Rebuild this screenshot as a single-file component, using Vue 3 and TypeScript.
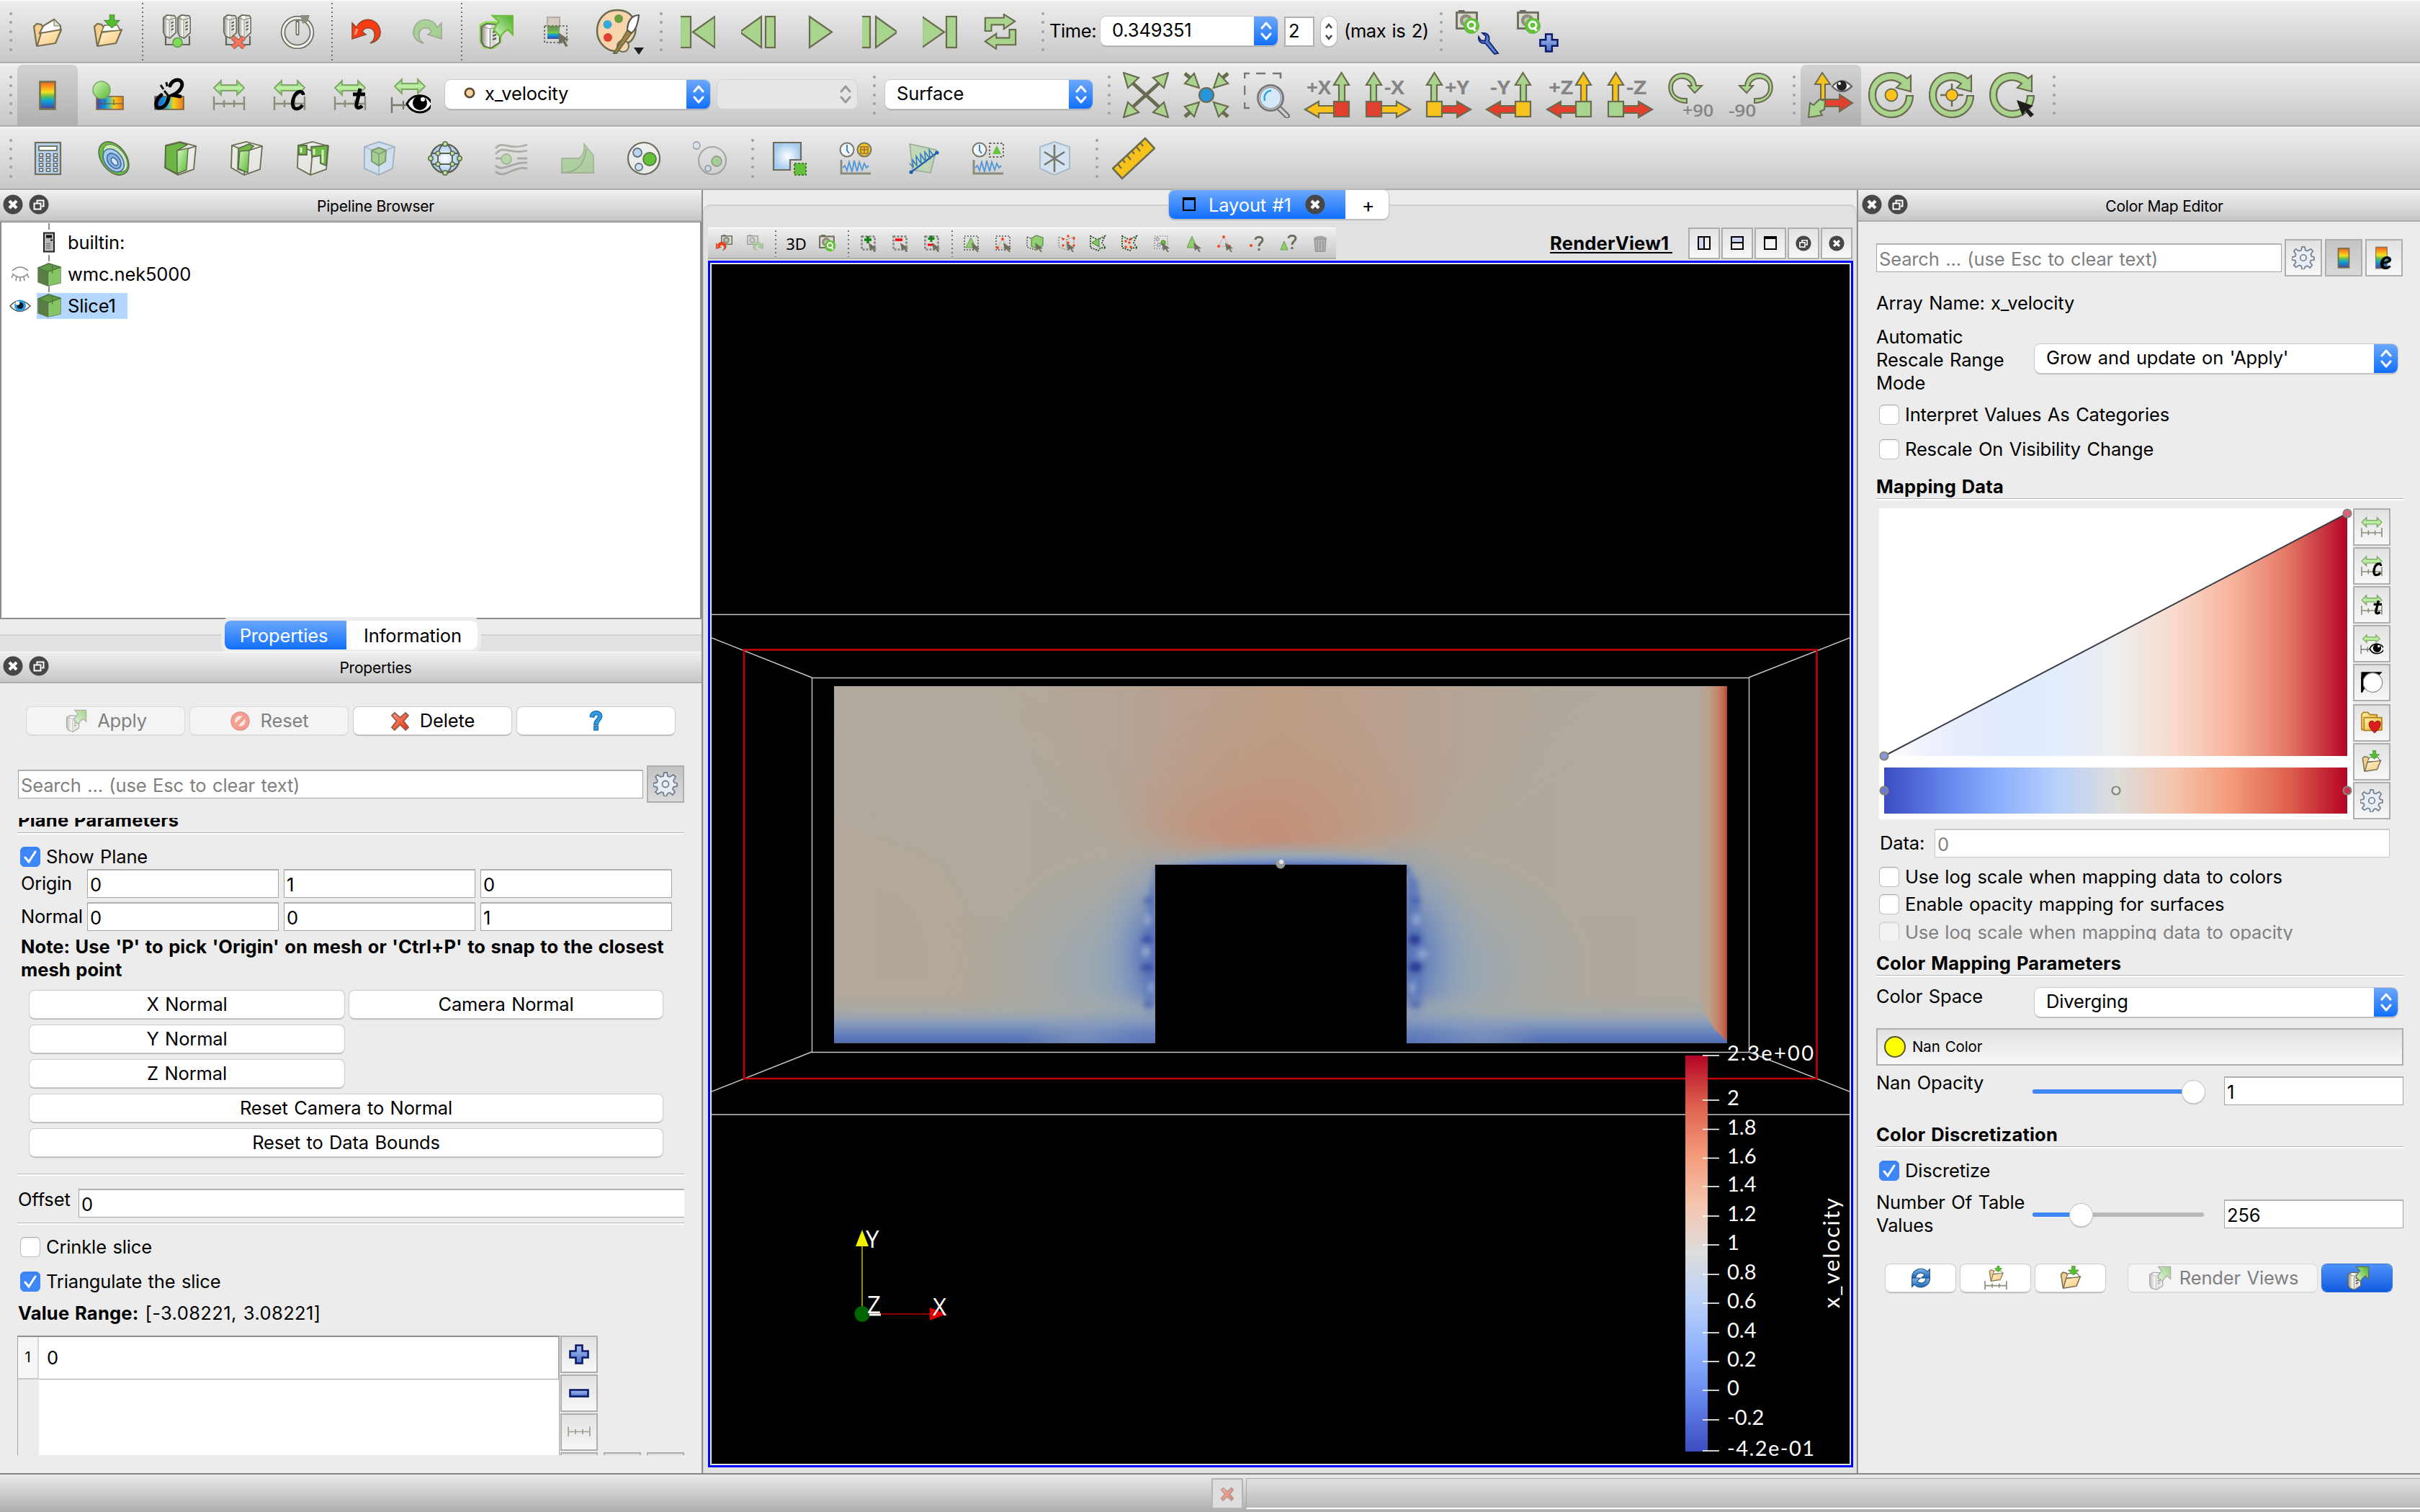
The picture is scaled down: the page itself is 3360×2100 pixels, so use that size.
<script setup lang="ts">
interface ToolItem {
  k: 'handle' | 'sep' | 'btn' | 'axis' | 'text' | 'combo' | 'field' | 'spin'
  w: number
  i?: string
  s?: number
  on?: boolean
  off?: boolean
  t?: string
  icon?: string
  ml?: number
  up?: string
  side?: string
  box?: string
  left?: boolean
}

const btn = (i: string, s = 48, w = 84, extra: Partial<ToolItem> = {}): ToolItem => ({ k: 'btn', w, i, s, ...extra })
const handle = (w: number): ToolItem => ({ k: 'handle', w })
const sep = (w: number): ToolItem => ({ k: 'sep', w })

const G = '#a8d48d'
const Y = '#f7c21b'
const R = '#e23f2e'
const axis = (t: string, left: boolean, up: string, side: string, box: string): ToolItem => ({ k: 'axis', w: 84, t, left, up, side, box })

const mainRow: ToolItem[] = [
  handle(24), btn('open'), btn('save'), sep(11),
  btn('connect'), btn('disconnect'), btn('power'), sep(12),
  btn('undo'), btn('redo', 48, 84, { off: true }), sep(12),
  btn('autoapply'), btn('find'), btn('palette', 64), handle(28),
  btn('first'), btn('back'), btn('play'), btn('fwd'), btn('last'), btn('loop', 50), handle(26),
  { k: 'text', w: 71, t: 'Time:' },
  { k: 'combo', w: 246, t: '0.349351' },
  { k: 'field', w: 42, t: '2', ml: 9 },
  { k: 'spin', w: 22, ml: 9 },
  { k: 'text', w: 118, t: '(max is 2)', ml: 10 },
  handle(26), btn('cam-wrench', 64, 84), btn('cam-plus', 64, 84),
]

const colorRow: ToolItem[] = [
  handle(24), btn('bar', 48, 84, { on: true }), btn('editmap'), btn('unlink'), btn('rescale'), btn('rescale-c'), btn('rescale-t'), btn('rescale-eye', 56),
  { k: 'combo', w: 368, t: 'x_velocity', icon: 'point', ml: 6 },
  { k: 'combo', w: 194, t: '', off: true, ml: 10 },
  handle(33),
  { k: 'combo', w: 288, t: 'Surface', ml: 6 },
  handle(32), btn('cam-reset', 64), btn('cam-center', 64), btn('cam-zoom', 64),
  axis('+X', true, G, Y, R), axis('-X', false, G, Y, R),
  axis('+Y', false, G, R, Y), axis('-Y', true, G, R, Y),
  axis('+Z', true, Y, R, G), axis('-Z', false, Y, R, G),
  btn('rot-plus', 64), btn('rot-minus', 64), handle(27),
  btn('axes-eye', 64, 84, { on: true }), btn('rc-center', 64), btn('rc-cross', 64), btn('rc-pick', 64), handle(25),
]

const filterRow: ToolItem[] = [
  handle(20),
  ...['calc', 'contour', 'clip', 'slice', 'threshold', 'subset', 'glyph'].map((n) => btn(n, 48, 92)),
  btn('stream', 48, 92, { off: true }), btn('warp', 48, 92, { off: true }), btn('group', 48, 92), btn('ungroup', 48, 92, { off: true }),
  handle(18),
  ...['extract', 'plot-time', 'plot-line', 'plot-sel', 'probe'].map((n) => btn(n, 48, 92)),
  handle(18), btn('ruler', 60, 92),
]

const toolbars = [mainRow, colorRow, filterRow]

const viewTools = [
  'v-undo', 'v-redo', '|12', '3D', 'v-cam', '|13', 's-add', 's-sub', 's-tog', '|11',
  's-cell', 's-point', 's-fcell', 's-fpoint', 's-pcell', 's-ppoint', 's-block', 's-icell', 's-ipoint', 's-qpoint', 's-qcell', 's-trash',
]
const viewButtons = ['w-splith', 'w-splitv', 'w-max', 'c-float', 'c-close']

const ticks = [
  { y: 1466, l: '2.3e+00', w: 120 }, { y: 1528, l: '2', w: 0 }, { y: 1568.5, l: '1.8', w: 0 }, { y: 1608.5, l: '1.6', w: 0 },
  { y: 1648, l: '1.4', w: 0 }, { y: 1689, l: '1.2', w: 0 }, { y: 1729, l: '1', w: 0 }, { y: 1770, l: '0.8', w: 0 },
  { y: 1810, l: '0.6', w: 0 }, { y: 1851, l: '0.4', w: 0 }, { y: 1891, l: '0.2', w: 0 }, { y: 1931, l: '0', w: 0 },
  { y: 1972, l: '-0.2', w: 0 }, { y: 2015, l: '-4.2e-01', w: 121 },
]

const coolwarm = ['#3b4cc0', '#6282ea', '#8db0fe', '#b8d0f9', '#dddddd', '#f5c4ad', '#f49a7b', '#de604d', '#b40426']
const mapButtons = ['rescale', 'rescale-c', 'rescale-t', 'rescale-eye', 'invert', 'favorites', 'save', 'gear']

const origin = ['0', '1', '0']
const normal = ['0', '0', '1']
</script>

<template>
  <div class="app">
    <svg class="defs" width="0" height="0" aria-hidden="true">
      <defs>
        <linearGradient id="gRain" x1="0" y1="0" x2="0" y2="1">
          <stop offset="0" stop-color="#ee5a24" /><stop offset=".2" stop-color="#f9a11b" /><stop offset=".38" stop-color="#f3e11c" />
          <stop offset=".52" stop-color="#6cc04a" /><stop offset=".7" stop-color="#0aa3dc" /><stop offset="1" stop-color="#4a3f9f" />
        </linearGradient>
        <linearGradient id="gRainH" x1="0" y1="0" x2="1" y2="0">
          <stop offset="0" stop-color="#5a3f9f" /><stop offset=".3" stop-color="#0a8fdc" /><stop offset=".5" stop-color="#5cc0a0" />
          <stop offset=".65" stop-color="#f3d11c" /><stop offset="1" stop-color="#f0761b" />
        </linearGradient>
        <linearGradient id="gFold" x1="0" y1="0" x2="1" y2="1"><stop offset="0" stop-color="#fff3d6" /><stop offset="1" stop-color="#fcc877" /></linearGradient>
        <linearGradient id="gGreen" x1="0" y1="0" x2="1" y2="1"><stop offset="0" stop-color="#d4f5c0" /><stop offset="1" stop-color="#55b82e" /></linearGradient>
        <linearGradient id="gArrow" x1="0" y1="1" x2="1" y2="0"><stop offset="0" stop-color="#d8f7c8" /><stop offset="1" stop-color="#4fae28" /></linearGradient>
        <linearGradient id="gGreenV" x1="0" y1="0" x2="0" y2="1"><stop offset="0" stop-color="#6cd040" /><stop offset=".5" stop-color="#c4efae" /><stop offset="1" stop-color="#6cd040" /></linearGradient>
        <linearGradient id="gMetal" x1="0" y1="0" x2="1" y2="0"><stop offset="0" stop-color="#8b8a80" /><stop offset=".4" stop-color="#fff" /><stop offset=".65" stop-color="#d6d5cc" /><stop offset="1" stop-color="#f4f4f0" /></linearGradient>
        <linearGradient id="gRed" x1="0" y1="0" x2="1" y2="1"><stop offset="0" stop-color="#ff9c80" /><stop offset="1" stop-color="#ee2a0c" /></linearGradient>
        <linearGradient id="gBluePlus" x1="0" y1="0" x2="0" y2="1"><stop offset="0" stop-color="#a9c0f0" /><stop offset="1" stop-color="#4c70cc" /></linearGradient>
        <radialGradient id="gSky"><stop offset="0" stop-color="#fff" /><stop offset="1" stop-color="#a5cbee" /></radialGradient>
        <linearGradient id="gYel" x1="0" y1="0" x2="1" y2="1"><stop offset="0" stop-color="#fff3a8" /><stop offset="1" stop-color="#e9ac28" /></linearGradient>
        <linearGradient id="gRing" x1="0" y1="0" x2="0" y2="1"><stop offset="0" stop-color="#7fb6ea" /><stop offset="1" stop-color="#1566b8" /></linearGradient>

        <symbol id="i-folder" viewBox="0 0 48 48">
          <path d="M9 44 5 17 9 13l6 1 3 4 8-1" fill="#f6cf8c" stroke="#77704f" stroke-width="2.2" />
          <path d="M9.500 44 15 25l28-4-8 19z" fill="url(#gFold)" stroke="#77704f" stroke-width="2.200" stroke-linejoin="round" />
        </symbol>
        <symbol id="i-open" viewBox="0 0 48 48">
          <path d="M9 44 5 17 9 13l6 1 3 4" fill="#f6cf8c" stroke="#77704f" stroke-width="2.200" />
          <path d="M13 26 18 16 33 7l9 9 0 8z" fill="#fff" stroke="#77704f" stroke-width="2.200" />
          <path d="M33 7v9h9z" fill="#ddd" stroke="#77704f" stroke-width="1" />
          <path d="M9.500 44 15 26l28-5-8 19z" fill="url(#gFold)" stroke="#77704f" stroke-width="2.200" stroke-linejoin="round" />
        </symbol>
        <symbol id="i-down" viewBox="0 0 24 18"><path d="M9 0h6v8h7L12 18 2 8h7z" fill="#4fc32c" stroke="#5a8a40" stroke-width="1.200" /></symbol>
        <symbol id="i-save" viewBox="0 0 48 48">
          <use href="#i-folder" width="48" height="48" />
          <path d="M15 24 19 15h18l4 7z" fill="#fff" stroke="#77704f" stroke-width="1.600" />
          <use href="#i-down" x="17" y="0" width="25" height="19" />
        </symbol>
        <symbol id="i-cyl" viewBox="0 0 24 36" preserveAspectRatio="none">
          <path d="M2 5 8 1l13 1 2 3v22l-10 8-8-3-3-6z" fill="url(#gMetal)" stroke="#66655a" stroke-width="1.800" />
          <path d="M2 5 12 8 23 5M12 8v26" fill="none" stroke="#8b8a80" stroke-width="1.200" />
          <path d="M15 13l4-2M15 18l4-2M15 23l4-2" stroke="#55544a" stroke-width="2" />
        </symbol>
        <symbol id="i-connect" viewBox="0 0 48 48">
          <path d="M9 30v12h33V30" fill="none" stroke="#66655a" stroke-width="2.200" />
          <use href="#i-cyl" x="4" y="0" width="20" height="34" /><use href="#i-cyl" x="24" y="0" width="20" height="34" />
          <circle cx="25.500" cy="39" r="6.500" fill="#7edc5a" stroke="#5c9c46" stroke-width="1.500" />
        </symbol>
        <symbol id="i-disconnect" viewBox="0 0 48 48">
          <path d="M9 30v12h33V30" fill="none" stroke="#66655a" stroke-width="2.200" />
          <use href="#i-cyl" x="4" y="0" width="20" height="34" /><use href="#i-cyl" x="24" y="0" width="20" height="34" />
          <path d="M18 32l16 14M34 32 18 46" stroke="#8f6a58" stroke-width="7" /><path d="M18 32l16 14M34 32 18 46" stroke="#ff7058" stroke-width="4.500" />
        </symbol>
        <symbol id="i-power" viewBox="0 0 48 48">
          <circle cx="24" cy="25" r="20" fill="none" stroke="#6f6e62" stroke-width="6.500" /><circle cx="24" cy="25" r="20" fill="none" stroke="#f1f1ee" stroke-width="3" />
          <path d="M28 1h13l-3 9-7 3z" fill="#8d8c80" />
          <path d="M24 10v17" stroke="#6f6e62" stroke-width="5" stroke-linecap="round" /><path d="M24 11v16" stroke="#f1f1ee" stroke-width="1.800" />
        </symbol>
        <symbol id="i-undo" viewBox="0 0 48 48">
          <path d="M4 34V12l6 6C16 4 36 3 42 19c4 12-4 19-13 21 8-5 9-19-1-21-5-1-8 1-10 5l5 4z" fill="#fb3b12" stroke="#8a4a34" stroke-width="1.600" />
          <path d="M8 28l3-8" stroke="#ff9b80" stroke-width="3" />
        </symbol>
        <symbol id="i-redo" viewBox="0 0 48 48">
          <g transform="matrix(-1 0 0 1 48 0)"><path d="M4 34V12l6 6C16 4 36 3 42 19c4 12-4 19-13 21 8-5 9-19-1-21-5-1-8 1-10 5l5 4z" fill="#7cc95c" stroke="#6d7f5a" stroke-width="1.600" /></g>
        </symbol>
        <symbol id="i-apply" viewBox="0 0 48 48">
          <use href="#i-cyl" x="3" y="12" width="29" height="36" />
          <path d="M22 2h24v24l-6-6c-5 3-8 6-10 11l-9-9c2-5 5-9 8-12z" fill="url(#gArrow)" stroke="#62704f" stroke-width="1.800" />
        </symbol>
        <symbol id="i-autoapply" viewBox="0 0 48 48">
          <path d="M2 15 9 11h14l7 5v22L18 49 8 46 2 38z" fill="#8be04a" stroke="#8be04a" stroke-width="3" stroke-linejoin="round" />
          <use href="#i-cyl" x="1" y="12" width="29" height="36" />
          <path d="M19 2h28v26l-7-7c-5 3-8 5-10 10l-9-9c1-5 4-9 7-12z" fill="url(#gArrow)" stroke="#6cbf3a" stroke-width="2.400" />
        </symbol>
        <symbol id="i-cursor" viewBox="0 0 14 18"><path d="M0 0 13 9 8 10l4 7-3 1-4-7-4 4z" fill="#6e6d5e" /></symbol>
        <symbol id="i-find" viewBox="0 0 48 48">
          <rect x="11" y="4" width="17" height="13" fill="#d5cbc3" stroke="#b3aca6" stroke-width="2" />
          <rect x="11" y="16" width="17" height="18" fill="url(#gRain)" />
          <rect x="11" y="16" width="17" height="8" fill="#3f9d6a" opacity=".75" />
          <rect x="7" y="16" width="31" height="23" fill="none" stroke="#6e6d5e" stroke-width="2" stroke-dasharray="2.500 2.500" />
          <use href="#i-cursor" x="26" y="25" width="16" height="20" />
        </symbol>
        <symbol id="i-palette" viewBox="0 0 64 64">
          <path d="M32 2C14 2 4 16 4 31s12 28 26 28c6 0 8-4 6-8 8-2 15-4 18-10 8-12 4-39-22-39z" fill="#f8d5ac" stroke="#6b6b4f" stroke-width="2.500" />
          <circle cx="40" cy="52" r="8" fill="#f8d5ac" stroke="#6b6b4f" stroke-width="2" />
          <circle cx="18.500" cy="22" r="6" fill="#34aadc" /><circle cx="34" cy="14" r="6" fill="#6d9c3c" /><circle cx="19" cy="40" r="6" fill="#e23f2e" />
          <path d="M27 62 46 30l6 4-21 28z" fill="#a3823f" stroke="#6b6b4f" stroke-width="1.800" />
          <path d="M46 30C46 18 52 9 62 9c-1 12-4 20-10 25z" fill="#fff" stroke="#55554a" stroke-width="2.200" />
        </symbol>

        <symbol id="i-first" viewBox="0 0 48 48"><g fill="#a8d48d" stroke="#6b6b4f" stroke-width="2.200"><rect x="-1" y="3" width="15" height="43" /><path d="M17 24.500 47.500 3v43z" /></g></symbol>
        <symbol id="i-back" viewBox="0 0 48 48"><g fill="#a8d48d" stroke="#6b6b4f" stroke-width="2.200"><rect x="34" y="3" width="13" height="43" /><path d="M-2 24.500 28 3v43z" /></g></symbol>
        <symbol id="i-play" viewBox="0 0 48 48"><path d="M11 3 42 24.500 11 46z" fill="#a8d48d" stroke="#6b6b4f" stroke-width="2.200" /></symbol>
        <symbol id="i-fwd" viewBox="0 0 48 48"><g fill="#a8d48d" stroke="#6b6b4f" stroke-width="2.200"><rect x="-2" y="3" width="13" height="43" /><path d="M19 3 49 24.500 19 46z" /></g></symbol>
        <symbol id="i-last" viewBox="0 0 48 48"><g fill="#a8d48d" stroke="#6b6b4f" stroke-width="2.200"><rect x="33" y="3" width="14" height="43" /><path d="M-1 3 30 24.500-1 46z" /></g></symbol>
        <symbol id="i-loop" viewBox="0 0 52 52"><g fill="#a8d48d" stroke="#6b6b4f" stroke-width="2.200" stroke-linejoin="miter"><path d="M4 25V6h27V1l16 10-16 11v-6H13v9z" /><path d="M48 23v22H20v6L4 40l16-11v6h19V23z" /></g></symbol>

        <symbol id="i-camera" viewBox="0 0 32 28">
          <rect x="1.500" y="3.500" width="29" height="23" fill="#dcdbd2" stroke="#6e6d5e" stroke-width="3" /><rect x="4" y="0" width="9" height="4" fill="#6e6d5e" />
          <circle cx="15" cy="15" r="9" fill="#8f8e80" /><circle cx="15" cy="15" r="4.500" fill="#c4c3b8" />
        </symbol>
        <symbol id="i-camq" viewBox="0 0 34 34">
          <use href="#i-camera" x="0" y="0" width="31" height="27" />
          <circle cx="22" cy="22" r="11" fill="#62c23a" /><circle cx="22" cy="21" r="5" fill="none" stroke="#fff" stroke-width="2.800" /><path d="M23 24l5 5" stroke="#fff" stroke-width="2.800" />
        </symbol>
        <symbol id="i-plus" viewBox="0 0 28 28"><path d="M9.500 1.500h9v8h8v9h-8v8h-9v-8h-8v-9h8z" fill="url(#gBluePlus)" stroke="#0d1a66" stroke-width="2.600" /></symbol>
        <symbol id="i-minus" viewBox="0 0 28 28"><rect x="1.500" y="9.500" width="25" height="9" fill="url(#gBluePlus)" stroke="#0d1a66" stroke-width="2.600" /></symbol>
        <symbol id="i-cam-wrench" viewBox="0 0 64 64">
          <use href="#i-camq" x="1" y="2" width="34" height="34" />
          <path d="M33 39l3 5 6 1 1-7-5-4c8-1 11 5 9 11l13 17-5 1-13-15c-6 1-10-3-9-9z" fill="#5b7fd0" stroke="#13246e" stroke-width="1.800" />
        </symbol>
        <symbol id="i-cam-plus" viewBox="0 0 64 64"><use href="#i-camq" x="2" y="2" width="34" height="34" /><use href="#i-plus" x="33" y="34" width="27" height="27" /></symbol>

        <symbol id="i-bar" viewBox="0 0 48 48"><rect x="13.500" y="5.500" width="21" height="38" fill="url(#gRain)" stroke="#77704f" stroke-width="2.600" /></symbol>
        <symbol id="i-bare" viewBox="0 0 48 48"><rect x="8" y="3" width="22" height="42" fill="url(#gRain)" stroke="#77704f" stroke-width="1.500" /><text x="16" y="46" font-family="Lato" font-weight="900" font-style="italic" font-size="48">e</text></symbol>
        <symbol id="i-editmap" viewBox="0 0 48 48">
          <rect x="8" y="26" width="37" height="18" fill="url(#gRainH)" stroke="#8a6f4f" stroke-width="1.800" /><path d="M8 36h37M20 30v8M32 30v8" stroke="#55554a" stroke-width="1.200" />
          <ellipse cx="15" cy="17" rx="12" ry="12" fill="url(#gGreen)" stroke="#7aa565" stroke-width="1.500" />
        </symbol>
        <symbol id="i-unlink" viewBox="0 0 48 48">
          <rect x="5" y="26" width="40" height="18" fill="url(#gRainH)" stroke="#6b5a44" stroke-width="1.500" />
          <path d="M26 11c4-9 13-10 16-5 3 6-3 14-12 18l10 2M14 24c-8 6-10 18-3 18 8 0 12-8 13-14" fill="none" stroke="#000" stroke-width="5" stroke-linecap="round" />
          <path d="M18 18 26 28M13 10l4 6M21 6l1 6" stroke="#111" stroke-width="3" />
        </symbol>
        <symbol id="i-dbl" viewBox="0 0 48 48"><path d="M3 14 13 4v6h22V4l10 10-10 10v-6H13v6z" fill="url(#gGreenV)" stroke="#7fa56b" stroke-width="1.800" /></symbol>
        <symbol id="i-rule" viewBox="0 0 48 48"><path d="M3 26v19M45 26v19M3 36h42M17 31v10M31 31v10" fill="none" stroke="#8b8c7a" stroke-width="2.400" /></symbol>
        <symbol id="i-rescale" viewBox="0 0 48 48"><use href="#i-dbl" width="48" height="48" /><use href="#i-rule" width="48" height="48" /></symbol>
        <symbol id="i-rescale-c" viewBox="0 0 48 48"><use href="#i-rescale" width="48" height="48" /><path d="M43 24c0-7-8-6-12 1-4 8-4 19 3 18 4 0 6-2 8-5" fill="none" stroke="#000" stroke-width="4.800" /></symbol>
        <symbol id="i-rescale-t" viewBox="0 0 48 48"><use href="#i-rescale" width="48" height="48" /><path d="M38 15 33 37c-1 6 4 6 8 2M28 23h17" fill="none" stroke="#000" stroke-width="5" /></symbol>
        <symbol id="i-rescale-eye" viewBox="0 0 56 56">
          <use href="#i-dbl" x="0" y="2" width="54" height="48" />
          <path d="M2 31v22M18 36v12M2 42h22" stroke="#77786a" stroke-width="2.400" fill="none" />
          <path d="M23 40C30 26 50 24 58 40 52 56 30 56 23 40z" fill="#fff" stroke="#000" stroke-width="3" /><circle cx="41" cy="39" r="10" /><circle cx="45" cy="34" r="3" fill="#fff" />
        </symbol>
        <symbol id="i-point" viewBox="0 0 16 16"><circle cx="8" cy="8" r="5.500" fill="#f8d0a0" stroke="#5e4a30" stroke-width="2.400" /></symbol>
        <symbol id="i-cam-reset" viewBox="0 0 64 64">
          <path d="M10 12 54 52M54 12 10 52" stroke="#6b6b4f" stroke-width="5" />
          <g fill="#a8d48d" stroke="#6b6b4f" stroke-width="2.200"><path d="M1 1 22 8 7 22zM63 1 42 8 57 22zM1 63 22 56 7 42zM63 63 42 56 57 42z" /></g>
        </symbol>
        <symbol id="i-cam-center" viewBox="0 0 64 64">
          <path d="M2 2 14 12M62 2 50 12M2 62 14 52M62 62 50 52" stroke="#6b6b4f" stroke-width="5" />
          <g fill="#a8d48d" stroke="#6b6b4f" stroke-width="2.200"><path d="M22 22 15 2 2 16zM42 22 49 2 62 16zM22 42 15 62 2 48zM42 42 49 62 62 48z" /></g>
          <circle cx="32" cy="32" r="10" fill="#2596d8" stroke="#6b6b4f" stroke-width="2.200" />
        </symbol>
        <symbol id="i-cam-zoom" viewBox="0 0 64 64">
          <path d="M1 9V2h7M17 2h13M40 2h11v7M1 19v13M1 42v8h7" fill="none" stroke="#77777a" stroke-width="2.600" />
          <path d="M47 48 60 61" stroke="#77777a" stroke-width="8" stroke-linecap="round" /><path d="M47 48 60 61" stroke="#d0d0d0" stroke-width="3.500" stroke-linecap="round" />
          <circle cx="37" cy="36" r="16.500" fill="#d3e9fa" stroke="#77777a" stroke-width="5" /><circle cx="37" cy="36" r="15.500" fill="none" stroke="#c9c9c9" stroke-width="1.500" />
          <path d="M29 40c-2-8 3-14 9-14" fill="none" stroke="#2aa8dc" stroke-width="2.500" />
        </symbol>
        <symbol id="i-rot-plus" viewBox="0 0 64 64">
          <path d="M27 43C-6 42-4 2 21 2c14 0 18 10 19 17h8L38 29 29 19h5C30 4 6 6 7 22c0 10 8 16 20 15z" fill="#a8d48d" stroke="#6b6b4f" stroke-width="2" />
          <text x="21" y="62" font-family="Open Sans" font-weight="600" font-size="23" fill="#858585" textLength="43" lengthAdjust="spacingAndGlyphs">+90</text>
        </symbol>
        <symbol id="i-rot-minus" viewBox="0 0 64 64">
          <path d="M37 43C70 42 68 2 43 2 29 2 25 12 24 19h-8l10 10 9-10h-5c4-15 28-13 27 3 0 10-8 16-20 15z" fill="#a8d48d" stroke="#6b6b4f" stroke-width="2" />
          <text x="1" y="62" font-family="Open Sans" font-weight="600" font-size="23" fill="#858585" textLength="38" lengthAdjust="spacingAndGlyphs">-90</text>
        </symbol>
        <symbol id="i-axes-eye" viewBox="0 0 64 64">
          <g stroke="#6b6b4f" stroke-width="2"><path d="M18 38V17h-8L20 1l11 16h-7v21z" fill="#f7c21b" /><path d="M24 38h20v-7l18 12-18 12v-7H24z" fill="#e23f2e" /><path d="M24 40l-1 12-6 3 3 5-19 3 2-20 5 3 8-8z" fill="#a8d48d" /></g>
          <path d="M34 20Q47 5 61 20 47 34 34 20z" fill="#fff" stroke="#666" stroke-width="2.500" /><circle cx="47" cy="19" r="7" fill="#222" /><circle cx="44" cy="16" r="2" fill="#fff" />
        </symbol>
        <symbol id="i-rarc" viewBox="0 0 64 64"><path d="M53 33h9C62 50 48 63 32 63S1 50 1 32 14 1 32 1c9 0 16 3 22 8l5-4v22l-20-5 6-6C30 6 10 14 10 32c0 12 9 22 22 22s21-9 21-21z" fill="#a8d48d" stroke="#6b6b4f" stroke-width="2.200" /></symbol>
        <symbol id="i-rc-center" viewBox="0 0 64 64"><use href="#i-rarc" width="64" height="64" /><circle cx="32" cy="32" r="8.500" fill="#ffc21b" stroke="#6b6b4f" stroke-width="1.800" /></symbol>
        <symbol id="i-rc-cross" viewBox="0 0 64 64"><use href="#i-rarc" width="64" height="64" /><path d="M32 16v32M16 32h32" stroke="#6b6b4f" stroke-width="2.500" /><circle cx="32" cy="32" r="8" fill="#ffc21b" stroke="#6b6b4f" stroke-width="1.800" /></symbol>
        <symbol id="i-rc-pick" viewBox="0 0 64 64"><use href="#i-rarc" width="64" height="64" /><path d="M38 39 61 47l-7 4 8 8-5 4-7-9-4 7z" fill="#1d1d1b" /></symbol>

        <symbol id="i-calc" viewBox="0 0 48 48">
          <rect x="7" y="2" width="35" height="44" fill="#b7d3ef" stroke="#6e6d5e" stroke-width="2.200" /><rect x="12" y="7" width="25" height="6" fill="#fff" stroke="#6e6d5e" stroke-width="1.800" />
          <g fill="#f5f8fb" stroke="#5d5f5a" stroke-width="1.500"><path d="M12.500 17.500h5v4h-5zM22.500 17.500h5v4h-5zM32.500 17.500h5v4h-5zM12.500 24h5v4h-5zM22.500 24h5v4h-5zM32.500 24h5v4h-5zM12.500 31h5v4h-5zM22.500 31h5v4h-5zM32.500 31h5v4h-5zM12.500 38h5v4h-5zM22.500 38h5v4h-5zM32.500 38h5v4h-5z" /></g>
        </symbol>
        <symbol id="i-contour" viewBox="0 0 48 48"><g transform="rotate(-38 24 24)" stroke="#5d6b50" stroke-width="1.600">
          <ellipse cx="24" cy="24" rx="17" ry="26" fill="#6cc040" /><ellipse cx="26" cy="25" rx="13" ry="22" fill="#c6eab2" stroke-width="1" /><ellipse cx="22" cy="26" rx="12" ry="18" fill="#a9cdf0" stroke="#4a6a9a" /><ellipse cx="22" cy="27" rx="8" ry="12" fill="#7fb0e4" stroke="#4a6a9a" /><ellipse cx="22" cy="28" rx="3.500" ry="6" fill="#d8e8f8" stroke="#4a6a9a" />
        </g></symbol>
        <symbol id="i-cubew" viewBox="0 0 48 48"><path d="M24 1 46 7 43 39 21 47 3 37 4 6zM4 6l20 8 22-7M24 14l-3 33" fill="#f2f2ec" fill-opacity=".6" stroke="#6b6b4f" stroke-width="1.800" /></symbol>
        <symbol id="i-clip" viewBox="0 0 48 48"><use href="#i-cubew" width="48" height="48" /><path d="M4 7 24 2l10 3-14 8v32L4 37z" fill="#6db845" stroke="#5d6b4a" stroke-width="1.600" /><path d="M20 13 35 10l-2 30-13 5z" fill="url(#gGreen)" stroke="#5d6b4a" stroke-width="1.400" /></symbol>
        <symbol id="i-slice" viewBox="0 0 48 48"><use href="#i-cubew" width="48" height="48" /><path d="M13 10 28 4l6 3-8 8-2 28-12-4z" fill="#6db845" stroke="#5d6b4a" stroke-width="1.600" /><path d="M15 14l13-1-2 31-13-6z" fill="url(#gGreen)" stroke="#5d6b4a" stroke-width="1.400" /></symbol>
        <symbol id="i-threshold" viewBox="0 0 48 48"><use href="#i-cubew" width="48" height="48" /><path d="M4 6h12v13H5zM22 8l23-2-2 28-8-3V20l-12 2z" fill="#6db845" stroke="#5d6b4a" stroke-width="1.800" /><path d="M26 11v8M38 12v18M8 9v7" stroke="#d4f0c4" stroke-width="3" /></symbol>
        <symbol id="i-subset" viewBox="0 0 48 48"><path d="M24 1 46 8 43 38 24 47 4 38 4 8z" fill="#cfdfed" stroke="#a3b5c5" stroke-width="2" /><path d="M4 8l20 8 22-8M24 16v31" fill="none" stroke="#a3b5c5" stroke-width="1.500" /><path d="M24 9l10 4-1 15-9 6-10-6V13z" fill="#a5cf92" stroke="#7d9a72" stroke-width="2" /><path d="M14 13l10 5 10-5M24 18v15" fill="none" stroke="#7d9a72" stroke-width="1.500" /></symbol>
        <symbol id="i-glyph" viewBox="0 0 48 48"><circle cx="24" cy="24" r="20" fill="url(#gSky)" stroke="#5d5f50" stroke-width="2.200" /><ellipse cx="24" cy="24" rx="10" ry="20" fill="none" stroke="#5d5f50" stroke-width="2" /><path d="M5 17h38M5 32h38" stroke="#5d5f50" stroke-width="2" /><g fill="#b7e3a0" stroke="#5d6b4a" stroke-width="1.500"><circle cx="24" cy="4" r="3.200" /><circle cx="24" cy="44" r="3.200" /><circle cx="4" cy="24" r="3.200" /><circle cx="44" cy="24" r="3.200" /><circle cx="14" cy="17" r="3" /><circle cx="34" cy="17" r="3" /><circle cx="14" cy="32" r="3" /><circle cx="34" cy="32" r="3" /></g></symbol>
        <symbol id="i-stream" viewBox="0 0 48 48"><g fill="none" stroke="#85867a" stroke-width="2.800"><path d="M2 10C12-2 20 14 46 5M2 18C14 4 22 20 46 13M2 34c10 10 24-6 44-4M2 42c12 12 24-8 44-4M2 24h8M32 24h14" /></g><circle cx="17" cy="25" r="7" fill="#9fd286" stroke="#7a9a68" stroke-width="1.800" /></symbol>
        <symbol id="i-warp" viewBox="0 0 48 48"><path d="M2 24h24C32 20 34 12 33 4l13 16v24H2z" fill="#8fca76" stroke="#7a9a68" stroke-width="1.800" /><path d="M2 44C22 44 34 34 36 10" fill="none" stroke="#6f8f5e" stroke-width="2" /></symbol>
        <symbol id="i-group" viewBox="0 0 48 48"><circle cx="24" cy="24" r="22" fill="#f4f4f2" fill-opacity=".7" stroke="#6b6b5f" stroke-width="2.200" /><circle cx="15" cy="16" r="6" fill="#b9d6f0" stroke="#66707a" stroke-width="1.800" /><circle cx="32" cy="25" r="9" fill="#62c23a" stroke="#5d7a4a" stroke-width="1.800" /><circle cx="17" cy="36" r="5" fill="#cfe2f4" stroke="#66707a" stroke-width="1.800" /></symbol>
        <symbol id="i-ungroup" viewBox="0 0 48 48"><circle cx="27" cy="27" r="19" fill="none" stroke="#7d7d72" stroke-width="2.200" /><circle cx="5" cy="6" r="5" fill="#cfe2f4" stroke="#66707a" stroke-width="1.800" /><circle cx="33" cy="28" r="7" fill="#7ec763" stroke="#5d7a4a" stroke-width="1.800" /><circle cx="21" cy="38" r="4" fill="#cfe2f4" stroke="#66707a" stroke-width="1.800" /></symbol>
        <symbol id="i-extract" viewBox="0 0 48 48"><path d="M2 2h38v24H25v14H2z" fill="url(#gSky)" stroke="#6b6b5f" stroke-width="2.200" /><rect x="31" y="31" width="16" height="16" fill="#62c23a" stroke="#4a7a34" stroke-width="2" stroke-dasharray="3 2" /></symbol>
        <g id="wave"><path d="M4 26v19h41" fill="none" stroke="#8b8b7d" stroke-width="2.800" /><path d="M6 37l3-3 3 7 3-12 4 14 3-16 4 15 3-13 4 11 3-9 3 6 3-3" fill="none" stroke="#4d96dc" stroke-width="1.800" /></g>
        <symbol id="i-plot-time" viewBox="0 0 48 48"><use href="#wave" /><circle cx="12" cy="12" r="9.500" fill="#f2f5f8" stroke="#77776b" stroke-width="2" /><path d="M12 5v8l3 4" fill="none" stroke="#3d86cc" stroke-width="2" /><circle cx="36" cy="12" r="9.500" fill="#f9c11b" stroke="#77776b" stroke-width="2" /><path d="M31 8h10v9H31zM31 12h10M36 8v9" fill="none" stroke="#a5843a" stroke-width="2" /></symbol>
        <symbol id="i-plot-line" viewBox="0 0 48 48"><path d="M7 4 44 12 36 44 11 40z" fill="#b9d6ab" fill-opacity=".75" stroke="#98a890" stroke-width="1.500" /><path d="M9 43 45 16" stroke="#1c5fae" stroke-width="2.200" /><path d="M7 31l5 5-1-10 6 8-1-13 7 10-1-13 7 10-1-13 7 9-1-12 6 8" fill="none" stroke="#2e78c2" stroke-width="1.500" /><circle cx="45" cy="16" r="2.600" fill="#1c5fae" /><circle cx="9" cy="43" r="2.600" fill="#1c5fae" /></symbol>
        <symbol id="i-plot-sel" viewBox="0 0 48 48"><use href="#wave" /><circle cx="12" cy="12" r="9.500" fill="#f2f5f8" stroke="#77776b" stroke-width="2" /><path d="M12 5v8l3 4" fill="none" stroke="#3d86cc" stroke-width="2" /><rect x="26" y="3" width="19" height="19" fill="none" stroke="#66665a" stroke-width="2" stroke-dasharray="2.500 2.500" /><path d="M30 18l6-12 6 12z" fill="#62c23a" /></symbol>
        <symbol id="i-probe" viewBox="0 0 48 48"><path d="M24 1 45 8 45 38 24 47 4 38 4 8z" fill="#d4e2ef" stroke="#a9bccc" stroke-width="2" /><path d="M24 5v38M10 15l28 18M38 15 10 33" stroke="#77776b" stroke-width="2.600" /></symbol>
        <symbol id="i-ruler" viewBox="0 0 60 60"><path d="M1 44 46 2 59 16 14 58z" fill="#f7c21b" stroke="#6b6b4f" stroke-width="2.600" /><path d="M8 38l5 6M15 32l3 4M21 26l5 6M28 20l3 4M34 14l5 6M40 9l3 4" stroke="#6b6b4f" stroke-width="2.200" /></symbol>

        <symbol id="i-c-close" viewBox="0 0 28 28"><circle cx="14" cy="14" r="13.500" fill="#474747" /><path d="M9 9l10 10M19 9 9 19" stroke="#fff" stroke-width="4.200" /></symbol>
        <symbol id="i-c-float" viewBox="0 0 28 28"><circle cx="14" cy="14" r="13.500" fill="#474747" /><path d="M11.500 12V8.500h9v8H18" fill="none" stroke="#fff" stroke-width="2" /><rect x="7.500" y="12.500" width="9" height="8" fill="none" stroke="#fff" stroke-width="2" /></symbol>
        <symbol id="i-server" viewBox="0 0 16 28"><rect x="1" y="1" width="14" height="26" fill="#b9b9b9" stroke="#222" stroke-width="2" /><rect x="4" y="4" width="8" height="4" fill="#111" /><rect x="10" y="10" width="3" height="2" fill="#111" /><path d="M4 16h6M4 19h6M4 22h6" stroke="#777" stroke-width="1.500" /></symbol>
        <symbol id="i-cube" viewBox="0 0 32 32"><path d="M1 7 15 1 31 6v21l-17 4-13-5z" fill="#5f9a45" stroke="#6d7a55" stroke-width="1.500" /><path d="M14 12 31 6v21l-17 4z" fill="#86c566" /><path d="M1 7l13 5v19L1 26z" fill="#5a7d48" /><path d="M1 7 15 1l16 5-17 6zM14 12v19M20 4v10" fill="none" stroke="#4f7a3c" stroke-width="1.500" /></symbol>
        <symbol id="i-eye" viewBox="0 0 30 22"><path d="M1 11Q14-4 29 11 14 26 1 11z" fill="#fff" stroke="#555" stroke-width="1.600" /><circle cx="15" cy="10.500" r="8" fill="#2d9be0" /><circle cx="15" cy="10.500" r="4.600" fill="#0a1a2a" /><circle cx="11.500" cy="7" r="2.800" fill="#fff" /></symbol>
        <symbol id="i-eyeoff" viewBox="0 0 30 22"><path d="M4 6Q15-4 26 6M4 10q11 10 22 0M5 12l-2 4M10 15l-1 5M15 16v5M20 15l1 5M25 12l2 4" fill="none" stroke="#888" stroke-width="1.600" /></symbol>
        <symbol id="i-gear" viewBox="0 0 34 34"><path d="M15 1h4l1 5 3 1 5-3 3 3-3 5 1 3 4 1v4l-5 1-1 3 3 4-3 4-4-3-3 1-2 4h-3l-1-5-3-1-5 3-3-3 3-4-1-3-5-1v-4l5-1 1-3-3-5 3-3 4 3 4-1z" fill="#e9eef5" stroke="#707e90" stroke-width="1.800" /><circle cx="17" cy="17" r="4.500" fill="#f2f2f2" stroke="#707e90" stroke-width="1.800" /></symbol>
        <symbol id="i-reset" viewBox="0 0 30 30"><circle cx="15" cy="15" r="13" fill="#fb4a2c" stroke="#c9362a" stroke-width="1.500" /><circle cx="15" cy="15" r="7.500" fill="#f6ddd7" /><path d="M9 21 21 9" stroke="#fb4a2c" stroke-width="5" /></symbol>
        <symbol id="i-delete" viewBox="0 0 28 28"><path d="M6 2l8 7 8-7 4 4-7 8 7 9-4 4-8-8-8 8-4-4 7-9-7-8z" fill="url(#gRed)" stroke="#8f5a4a" stroke-width="1.800" /></symbol>
        <symbol id="i-help" viewBox="0 0 22 30"><path d="M2 9C2-2 20-2 20 8c0 6-6 7-6 13H8C8 13 14 13 14 8c0-3-6-3-6 2zM8 23h6v6H8z" fill="#2e9be6" stroke="#1c6cae" stroke-width="1.300" /></symbol>
        <symbol id="i-refresh" viewBox="0 0 34 34"><path d="M3 17C2 5 18-3 27 7l4-4v14H18l5-5C17 6 9 10 9 17z" fill="url(#gRing)" stroke="#1b5088" stroke-width="1.300" /><path d="M31 17c1 12-15 20-24 10l-4 4V17h13l-5 5c6 6 14 2 14-5z" fill="url(#gRing)" stroke="#1b5088" stroke-width="1.300" /></symbol>
        <symbol id="i-saverule" viewBox="0 0 48 48"><use href="#i-save" x="8" y="-1" width="34" height="34" /><path d="M3 30v17M45 30v17M3 39h42M17 35v8M31 35v8" stroke="#8b8c7a" stroke-width="2.400" /></symbol>
        <symbol id="i-invert" viewBox="0 0 48 48"><path d="M2 2h44l-6 6L10 36l-8 10z" fill="#000" /><circle cx="26" cy="24" r="20" fill="#fff" stroke="#8a8a8a" stroke-width="1.800" /><path d="M4 12v32" stroke="#000" stroke-width="4" /></symbol>
        <symbol id="i-favorites" viewBox="0 0 48 48"><path d="M3 38V6l4-4h9l4 5h15v31z" fill="url(#gYel)" stroke="#b07d18" stroke-width="2.400" /><path d="M8 40V13h37v26z" fill="url(#gYel)" stroke="#b07d18" stroke-width="2.400" /><path d="M30 45C14 32 17 20 24 20c4 0 6 4 6 4s2-4 7-4c7 0 9 12-7 25z" fill="#d91e1e" stroke="#8f1010" stroke-width="1.400" /></symbol>

        <symbol id="i-w-win" viewBox="0 0 24 24"><path d="M4 3h16v17H4z" fill="none" stroke="#000" stroke-width="2.200" /><path d="M3 4h18" stroke="#000" stroke-width="4" /></symbol>
        <symbol id="i-w-max" viewBox="0 0 24 24"><path d="M4 3h16v17H4z" fill="#f4f4f4" stroke="#000" stroke-width="2" /><path d="M3 4h18" stroke="#000" stroke-width="4" /></symbol>
        <symbol id="i-w-splith" viewBox="0 0 24 24"><path d="M4 3h8v17H4z" fill="#ccd5f2" /><path d="M4 3h16v17H4zM12 3v17" fill="none" stroke="#000" stroke-width="2" /></symbol>
        <symbol id="i-w-splitv" viewBox="0 0 24 24"><path d="M4 3h16v8H4z" fill="#ccd5f2" /><path d="M4 3h16v17H4zM4 11h16" fill="none" stroke="#000" stroke-width="2" /></symbol>

        <g id="dash"><rect x="2" y="2" width="19" height="19" fill="none" stroke="#5a5b4a" stroke-width="1.600" stroke-dasharray="2 2" /></g>
        <g id="dashg"><rect x="2.500" y="2.500" width="18" height="18" fill="none" stroke="#8a8a8a" stroke-width="3" stroke-dasharray="3 2" /></g>
        <g id="cur"><path d="M12 11 23 19l-4 .5 3 4-2 1-3-5-3 3z" fill="#6e6d5e" /></g>
        <symbol id="i-v-undo" viewBox="0 0 24 24"><use href="#i-camera" x="8" y="0" width="16" height="14" /><use href="#i-undo" x="0" y="7" width="17" height="18" /></symbol>
        <symbol id="i-v-redo" viewBox="0 0 24 24"><g opacity=".55"><use href="#i-camera" x="0" y="0" width="16" height="14" /><use href="#i-redo" x="7" y="7" width="17" height="18" /></g></symbol>
        <symbol id="i-v-cam" viewBox="0 0 24 24"><use href="#i-camq" x="0" y="0" width="24" height="24" /></symbol>
        <symbol id="i-s-add" viewBox="0 0 24 24"><use href="#dashg" /><path d="M11 2v10M6 7h10" stroke="#128312" stroke-width="3.500" /><use href="#cur" /></symbol>
        <symbol id="i-s-sub" viewBox="0 0 24 24"><use href="#dashg" /><path d="M5 7h10" stroke="#f00" stroke-width="3.500" /><use href="#cur" /></symbol>
        <symbol id="i-s-tog" viewBox="0 0 24 24"><use href="#dashg" /><path d="M11 1v9M6.500 5.500h9" stroke="#128312" stroke-width="3" /><path d="M6 14h9" stroke="#f00" stroke-width="3" /><use href="#cur" /></symbol>
        <symbol id="i-s-cell" viewBox="0 0 24 24"><use href="#dash" /><path d="M11 4 18 18H4z" fill="#8fce6f" stroke="#6b9a50" /><use href="#cur" /></symbol>
        <symbol id="i-s-point" viewBox="0 0 24 24"><use href="#dash" /><path d="M11 6 19 18H4z" fill="none" stroke="#c9b0a5" /><g fill="#fb3b12"><circle cx="11" cy="6" r="1.900" /><circle cx="4" cy="18" r="1.900" /><circle cx="19" cy="18" r="1.900" /></g><use href="#cur" /></symbol>
        <symbol id="i-s-fcell" viewBox="0 0 24 24"><path d="M1 3 12 7v14L1 17z" fill="none" stroke="#5a5b4a" stroke-width="1.500" stroke-dasharray="2 1.500" /><path d="M7 5 14 1l9 3v11l-8 4-8-3z" fill="#8fd072" stroke="#5d8a48" stroke-width="1.200" /><use href="#cur" /></symbol>
        <symbol id="i-s-fpoint" viewBox="0 0 24 24"><path d="M1 3 12 7v14L1 17zM12 7l10-4v13l-10 5" fill="none" stroke="#8a8b7a" stroke-width="1.300" stroke-dasharray="2 1.500" /><g fill="#fb3b12"><circle cx="14" cy="2" r="1.700" /><circle cx="7" cy="6" r="1.700" /><circle cx="7" cy="15" r="1.700" /><circle cx="14" cy="11" r="1.700" /><circle cx="22" cy="5" r="1.700" /><circle cx="22" cy="15" r="1.700" /></g><use href="#cur" /></symbol>
        <symbol id="i-s-pcell" viewBox="0 0 24 24"><path d="M1 2l10 5 10-5-4 9 5 8-7-1-3 4-11-4z" fill="none" stroke="#1f4a1f" stroke-width="1.800" stroke-dasharray="2 1.500" /><path d="M13 5v12L3 11z" fill="#7cc95c" stroke="#4a7a34" /></symbol>
        <symbol id="i-s-ppoint" viewBox="0 0 24 24"><path d="M1 2l10 5 10-5-4 9 5 8-7-1-3 4-11-4z" fill="none" stroke="#1f4a1f" stroke-width="1.800" stroke-dasharray="2 1.500" /><g fill="#fb3b12"><circle cx="6" cy="9" r="1.800" /><circle cx="13" cy="6" r="1.800" /><circle cx="6" cy="17" r="1.800" /><circle cx="13" cy="17" r="1.800" /><circle cx="11" cy="11" r="1.800" /></g></symbol>
        <symbol id="i-s-block" viewBox="0 0 24 24"><rect x="2" y="2" width="18" height="17" fill="none" stroke="#777" stroke-width="1.200" stroke-dasharray="1.500 2" /><circle cx="6" cy="6" r="2.200" fill="#cfe2f4" stroke="#777" /><circle cx="8" cy="14" r="2.200" fill="#cfe2f4" stroke="#777" /><circle cx="14" cy="11" r="3.200" fill="#62c23a" stroke="#5a7a4a" /><use href="#cur" /></symbol>
        <symbol id="i-s-icell" viewBox="0 0 24 24"><path d="M10 2 17 18H3z" fill="#8fce6f" stroke="#6b9a50" /><use href="#cur" /></symbol>
        <symbol id="i-s-ipoint" viewBox="0 0 24 24"><path d="M10 3 18 16H3z" fill="none" stroke="#c9b0a5" /><g fill="#fb3b12"><circle cx="10" cy="3" r="1.900" /><circle cx="3" cy="16" r="1.900" /><circle cx="18" cy="16" r="1.900" /></g><use href="#cur" /></symbol>
        <g id="qm"><path d="M10 7c0-5 10-5 10 0 0 4-5 4-5 9M15 19v3" fill="none" stroke="#6e6d5e" stroke-width="3" /></g>
        <symbol id="i-s-qpoint" viewBox="0 0 24 24"><circle cx="4" cy="15" r="2" fill="#fb3b12" /><use href="#qm" /></symbol>
        <symbol id="i-s-qcell" viewBox="0 0 24 24"><path d="M6 9 11 21H1z" fill="#8fce6f" stroke="#6b9a50" /><g transform="translate(2 -2)"><use href="#qm" /></g></symbol>
        <symbol id="i-s-trash" viewBox="0 0 24 24"><path d="M4 6h16l-1.500 17h-13z" fill="#b5b5b5" stroke="#8f8f8f" stroke-width="1.300" /><path d="M2 5Q12-2 22 5z" fill="#a5a5a5" /><path d="M8 8v13M12 8v13M16 8v13" stroke="#999" stroke-width="1.500" /></symbol>
      </defs>
    </svg>

    <!-- main toolbars -->
    <div v-for="(row, r) in toolbars" :key="r" class="toolbar" :class="{ tight: r === 2 }">
      <template v-for="(it, n) in row" :key="n">
        <div v-if="it.k === 'handle'" class="handle" :style="{ width: it.w + 'px' }"><i v-for="d in 5" :key="d" /></div>
        <div v-else-if="it.k === 'sep'" class="sep" :style="{ width: it.w + 'px' }"><i /></div>
        <div v-else-if="it.k === 'btn'" class="tbtn" :class="{ on: it.on, off: it.off }" :style="{ width: it.w + 'px' }">
          <svg :width="it.s" :height="it.s" class="ov"><use :href="'#i-' + it.i" /></svg>
          <b v-if="it.i === 'palette'" class="drop" />
        </div>
        <div v-else-if="it.k === 'axis'" class="tbtn" :style="{ width: it.w + 'px' }">
          <svg width="64" height="64" viewBox="0 0 64 64" class="ov">
            <g stroke="#6b6b4f" stroke-width="2.200" :transform="it.left ? '' : 'matrix(-1 0 0 1 64 0)'">
              <path d="M48 42V18h-7L51.500 1 62 18h-6v24z" :fill="it.up" />
              <path d="M42 47H20v-6L1 52l19 11v-6h22z" :fill="it.side" />
              <rect x="41" y="41" width="21" height="21" :fill="it.box" />
            </g>
            <text :x="it.left ? (it.t!.startsWith('+') ? 3 : 6) : 27" y="31" font-family="Open Sans" font-weight="700" font-size="26" fill="#858585" :textLength="it.t!.startsWith('+') ? 34 : 28" lengthAdjust="spacingAndGlyphs">{{ it.t }}</text>
          </svg>
        </div>
        <div v-else-if="it.k === 'text'" class="ttext" :style="{ width: it.w + 'px', marginLeft: (it.ml || 0) + 'px' }">{{ it.t }}</div>
        <div v-else-if="it.k === 'combo'" class="combo" :class="{ dim: it.off }" :style="{ width: it.w + 'px', marginLeft: (it.ml || 0) + 'px' }">
          <svg v-if="it.icon" width="18" height="18" class="cico"><use :href="'#i-' + it.icon" /></svg>
          <span>{{ it.t }}</span>
          <em><svg width="18" height="28" viewBox="0 0 18 28"><path d="M3 10l6-7 6 7M3 18l6 7 6-7" fill="none" :stroke="it.off ? '#9a9a9a' : '#fff'" stroke-width="3" stroke-linecap="round" stroke-linejoin="round" /></svg></em>
        </div>
        <div v-else-if="it.k === 'field'" class="tfield" :style="{ width: it.w + 'px', marginLeft: it.ml + 'px' }">{{ it.t }}</div>
        <div v-else class="tspin" :style="{ width: it.w + 'px', marginLeft: it.ml + 'px' }">
          <svg width="14" height="28" viewBox="0 0 14 28"><path d="M3 9l4-5 4 5M3 19l4 5 4-5" fill="none" stroke="#444" stroke-width="2.500" /></svg>
        </div>
      </template>
    </div>

    <div class="body">
      <!-- left dock -->
      <section class="left">
        <div class="title"><svg width="28" height="28"><use href="#i-c-close" /></svg><svg width="28" height="28"><use href="#i-c-float" /></svg><span>Pipeline Browser</span></div>
        <div class="tree">
          <div class="node n0"><svg class="teye" width="30" height="22" /><svg class="tico" width="16" height="29"><use href="#i-server" /></svg><span>builtin:</span></div>
          <div class="node"><svg class="teye" width="30" height="22"><use href="#i-eyeoff" /></svg><svg class="tico" width="33" height="33"><use href="#i-cube" /></svg><span>wmc.nek5000</span></div>
          <div class="node sel"><svg class="teye" width="30" height="22"><use href="#i-eye" /></svg><div class="hl"><svg class="tico" width="33" height="33"><use href="#i-cube" /></svg><span>Slice1</span></div></div>
        </div>
        <div class="dtabs"><div class="seg"><span class="act">Properties</span><span>Information</span></div></div>
        <div class="title"><svg width="28" height="28"><use href="#i-c-close" /></svg><svg width="28" height="28"><use href="#i-c-float" /></svg><span>Properties</span></div>

        <div class="actions">
          <button class="b dis"><svg width="32" height="34"><use href="#i-apply" /></svg><span>Apply</span></button>
          <button class="b dis"><svg width="29" height="29"><use href="#i-reset" /></svg><span>Reset</span></button>
          <button class="b"><svg width="27" height="27"><use href="#i-delete" /></svg><span>Delete</span></button>
          <button class="b"><svg width="21" height="28"><use href="#i-help" /></svg></button>
        </div>
        <div class="searchrow">
          <div class="input ph">Search ... (use Esc to clear text)</div>
          <div class="sq down"><svg width="34" height="34"><use href="#i-gear" /></svg></div>
        </div>
        <div class="scroll">
          <h3 class="cut">Plane Parameters</h3>
          <hr>
          <label class="cb m15"><i class="ck"><svg width="18" height="20" viewBox="0 0 18 20"><path d="M2 11l5 6 9-14" fill="none" stroke="#fff" stroke-width="3" stroke-linecap="round" /></svg></i>Show Plane</label>
          <div class="vec m1"><span>Origin</span><div v-for="(v, n) in origin" :key="n" class="input">{{ v }}</div></div>
          <div class="vec m6"><span>Normal</span><div v-for="(v, n) in normal" :key="n" class="input">{{ v }}</div></div>
          <p class="note">Note: Use 'P' to pick 'Origin' on mesh or 'Ctrl+P' to snap to the closest<br>mesh point</p>
          <div class="grid">
            <button class="b">X Normal</button><button class="b">Camera Normal</button>
            <button class="b">Y Normal</button><i />
            <button class="b">Z Normal</button><i />
            <button class="b wide">Reset Camera to Normal</button>
            <button class="b wide">Reset to Data Bounds</button>
          </div>
          <hr class="m24">
          <div class="offset"><span>Offset</span><div class="input">0</div></div>
          <hr class="m7">
          <label class="cb m15"><i />Crinkle slice</label>
          <label class="cb m16"><i class="ck"><svg width="18" height="20" viewBox="0 0 18 20"><path d="M2 11l5 6 9-14" fill="none" stroke="#fff" stroke-width="3" stroke-linecap="round" /></svg></i>Triangulate the slice</label>
          <div class="range"><b>Value Range:</b> [-3.08221, 3.08221]</div>
          <div class="tablerow">
            <div class="table"><div class="rowh"><span>1</span></div><div class="cells"><div class="cell">0</div></div></div>
            <div class="tcol">
              <div class="sq"><svg width="28" height="28"><use href="#i-plus" /></svg></div>
              <div class="sq"><svg width="28" height="28"><use href="#i-minus" /></svg></div>
              <div class="sq"><svg width="34" height="34" class="faded"><svg y="-9" width="34" height="34"><use href="#i-rule" /></svg></svg></div>
              <div class="trio"><div class="sq" /><div class="sq" /><div class="sq" /></div>
            </div>
          </div>
        </div>
      </section>

      <!-- render view -->
      <section class="center">
        <div class="ctabs">
          <div class="seg"><span class="act"><svg width="24" height="24"><use href="#i-w-win" /></svg><span class="lt">Layout #1</span><svg width="28" height="28"><use href="#i-c-close" /></svg></span><span class="plus">+</span></div>
        </div>
        <div class="pane">
          <div class="vhead">
            <div class="vtools">
              <template v-for="(v, n) in viewTools" :key="n">
                <div v-if="v.startsWith('|')" class="sep" :style="{ width: v.slice(1) + 'px' }"><i /></div>
                <div v-else-if="v === '3D'" class="vt d3">3D</div>
                <div v-else class="vt"><svg width="24" height="24"><use :href="'#i-' + v" /></svg></div>
              </template>
            </div>
            <div class="vname">RenderView1</div>
            <div class="vbtns"><div v-for="b in viewButtons" :key="b" class="sq s44"><svg :width="b.startsWith('c') ? 22 : 24" :height="b.startsWith('c') ? 22 : 24"><use :href="'#i-' + b" /></svg></div></div>
          </div>
          <div class="frame">
            <svg class="scene" width="1580" height="1666" viewBox="987 367 1580 1666">
              <defs>
                <linearGradient id="base" x1="0" x2="1" y1="0" y2="0">
                  <stop offset="0" stop-color="#b2a99d" /><stop offset=".18" stop-color="#b1aa9d" /><stop offset=".3" stop-color="#b4a598" /><stop offset=".4" stop-color="#b9a08e" /><stop offset=".5" stop-color="#bd9d85" />
                  <stop offset=".6" stop-color="#baa08d" /><stop offset=".7" stop-color="#b5a496" /><stop offset=".82" stop-color="#b0a99e" /><stop offset="1" stop-color="#b1aa9f" />
                </linearGradient>
                <radialGradient id="hot"><stop offset="0" stop-color="#c38f78" stop-opacity=".95" /><stop offset=".4" stop-color="#c1957e" stop-opacity=".65" /><stop offset="1" stop-color="#bd9c84" stop-opacity="0" /></radialGradient>
                <radialGradient id="cool"><stop offset="0" stop-color="#8da0bc" /><stop offset=".3" stop-color="#98a7b4" stop-opacity=".95" /><stop offset=".58" stop-color="#a4a9a8" stop-opacity=".85" /><stop offset=".82" stop-color="#aaaaa3" stop-opacity=".5" /><stop offset="1" stop-color="#b0a99f" stop-opacity="0" /></radialGradient>
                <radialGradient id="plume"><stop offset="0" stop-color="#5470b6" /><stop offset=".28" stop-color="#6480bc" stop-opacity=".92" /><stop offset=".6" stop-color="#849abd" stop-opacity=".6" /><stop offset="1" stop-color="#98a8b6" stop-opacity="0" /></radialGradient>
                <linearGradient id="floor" x1="0" x2="0" y1="0" y2="1"><stop offset="0" stop-color="#a8aaa6" stop-opacity="0" /><stop offset=".35" stop-color="#a0a9ac" stop-opacity=".6" /><stop offset=".6" stop-color="#8499bd" stop-opacity=".92" /><stop offset=".85" stop-color="#5f7bba" /><stop offset="1" stop-color="#506cb2" /></linearGradient>
                <linearGradient id="wall" x1="0" x2="1" y1="0" y2="0"><stop offset="0" stop-color="#b5a598" stop-opacity="0" /><stop offset=".4" stop-color="#bda18e" /><stop offset=".7" stop-color="#c5856b" /><stop offset=".88" stop-color="#c46850" /><stop offset="1" stop-color="#b04a38" /></linearGradient>
                <linearGradient id="cw" x1="0" x2="0" y1="1" y2="0"><stop v-for="(c, n) in coolwarm" :key="n" :offset="n / 8" :stop-color="c" /></linearGradient>
                <clipPath id="slab"><path d="M1157 953H2397V1448.500H1952V1201H1602.500V1448.500H1157z" /></clipPath>
                <filter id="b8" x="-50%" y="-50%" width="200%" height="200%"><feGaussianBlur stdDeviation="8" /></filter>
                <filter id="b3" x="-50%" y="-50%" width="200%" height="200%"><feGaussianBlur stdDeviation="3.500" /></filter>
                <filter id="b20" x="-50%" y="-50%" width="200%" height="200%"><feGaussianBlur stdDeviation="24" /></filter>
              </defs>
              <rect x="987" y="367" width="1580" height="1666" fill="#000" />
              <g fill="none" stroke="#c8c8c8" stroke-width="1.400">
                <path d="M987 853.500H2567M987 1548H2567M1126.500 941.500H2427.500V1461.500H1126.500zM987 886 1126 941M2567 886 2427 941M987 1516 1126 1461M2567 1516 2427 1461" />
              </g>
              <g clip-path="url(#slab)">
                <rect x="1157" y="953" width="1240" height="496" fill="url(#base)" />
                <path d="M1605 1195Q1570 1110 1380 1000 1250 950 1157 953V1449H1605zM1950 1195Q1990 1110 2160 1010 2300 950 2397 953V1449H1950z" fill="#b0a99d" opacity=".75" filter="url(#b20)" />
                <path d="M1157 1150V1420H1330Q1370 1300 1300 1200z" fill="#b5a79a" opacity=".7" filter="url(#b20)" />
                <ellipse cx="1775" cy="1160" rx="240" ry="200" fill="url(#hot)" />
                <ellipse cx="1710" cy="1145" rx="80" ry="26" fill="#c58b74" opacity=".5" filter="url(#b20)" />
                <ellipse cx="1603" cy="1350" rx="265" ry="200" fill="url(#cool)" />
                <ellipse cx="1951" cy="1350" rx="285" ry="205" fill="url(#cool)" />
                <ellipse cx="1606" cy="1330" rx="92" ry="165" fill="url(#plume)" />
                <ellipse cx="1948" cy="1330" rx="112" ry="175" fill="url(#plume)" />
                <path d="M1603 1200L1595 1240 1590 1300 1588 1449H1603z" fill="#5a76ba" opacity=".85" filter="url(#b3)" />
                <path d="M1951 1198L1968 1225 1972 1300 1974 1449H1951z" fill="#5a76ba" opacity=".85" filter="url(#b3)" />
                <path d="M1604 1204Q1640 1182 1777 1178 1900 1180 1958 1204V1215H1604z" fill="#9aa8b4" filter="url(#b8)" />
                <path d="M1604 1207Q1640 1194 1777 1192T1954 1205V1215H1604z" fill="#7a94c4" filter="url(#b3)" />
                <path d="M1604 1208Q1660 1201 1777 1200T1954 1206V1215H1604z" fill="#4561b0" filter="url(#b3)" />
                <rect x="1157" y="1380" width="446" height="69" fill="url(#floor)" />
                <rect x="1951" y="1380" width="446" height="69" fill="url(#floor)" />
                <ellipse cx="1606" cy="1452" rx="190" ry="62" fill="url(#plume)" />
                <ellipse cx="1948" cy="1452" rx="190" ry="62" fill="url(#plume)" />
                <g filter="url(#b3)" opacity=".9">
                  <ellipse cx="1592" cy="1277" rx="6" ry="9" fill="#94a6ca" /><ellipse cx="1590" cy="1322" rx="6" ry="8" fill="#98a8c8" /><ellipse cx="1597" cy="1372" rx="5" ry="9" fill="#8ea4cc" />
                  <ellipse cx="1592" cy="1305" rx="8" ry="6" fill="#3a50a4" /><ellipse cx="1592" cy="1344" rx="9" ry="6" fill="#3a50a4" /><ellipse cx="1594" cy="1251" rx="8" ry="4" fill="#4a64b0" /><ellipse cx="1594" cy="1395" rx="7" ry="4" fill="#4a64b0" />
                  <ellipse cx="1966" cy="1277" rx="7" ry="9" fill="#8fa4cc" /><ellipse cx="1974" cy="1325" rx="8" ry="7" fill="#8fa4cc" /><ellipse cx="1960" cy="1372" rx="5" ry="9" fill="#8ea4cc" />
                  <ellipse cx="1963" cy="1305" rx="8" ry="7" fill="#22348e" /><ellipse cx="1964" cy="1343" rx="9" ry="7" fill="#22348e" /><ellipse cx="1964" cy="1251" rx="8" ry="4" fill="#4a64b0" /><ellipse cx="1964" cy="1395" rx="7" ry="4" fill="#4a64b0" />
                </g>
                <path d="M2354 953H2397V1446L2380 1430 2364 1404 2354 1370z" fill="url(#wall)" />
              </g>
              <path d="M1032 902.500H2521.500V1498H1032z" fill="none" stroke="#c60000" stroke-width="2.600" />
              <circle cx="1777" cy="1200" r="6.500" fill="#9c9c9c" /><circle cx="1778" cy="1197" r="3" fill="#e4e4e4" />
              <rect x="2339" y="1466" width="31" height="550" fill="url(#cw)" />
              <g class="lbl">
                <template v-for="t in ticks" :key="t.y">
                  <path :d="`M2363 ${t.y}h23`" stroke="#fff" stroke-width="1.600" />
                  <text x="2397" :y="t.y + 7" :textLength="t.w || undefined">{{ t.l }}</text>
                </template>
                <text transform="translate(2553 1817) rotate(-90)" textLength="153" class="tl">x_velocity</text>
                <path d="M1196 1825V1730" stroke="#b5b500" stroke-width="1.600" /><path d="M1196 1708l9 23h-18z" fill="#f0f000" />
                <path d="M1196 1825h96" stroke="#c00000" stroke-width="1.600" /><path d="M1313 1825l-23-9v18z" fill="#e00000" />
                <ellipse cx="1196" cy="1825" rx="10.500" ry="11" fill="#006400" />
                <path d="M1206 1826h16" stroke="#fff" stroke-width="3" />
                <text x="1201" y="1733" class="ax">Y</text><text x="1203" y="1824" class="ax">Z</text><text x="1294" y="1827" class="ax">X</text>
              </g>
            </svg>
          </div>
        </div>
      </section>

      <!-- color map editor -->
      <section class="right">
        <div class="title"><svg width="28" height="28"><use href="#i-c-close" /></svg><svg width="28" height="28"><use href="#i-c-float" /></svg><span>Color Map Editor</span></div>
        <div class="rc">
          <div class="searchrow r">
            <div class="input ph">Search ... (use Esc to clear text)</div>
            <div class="sq"><svg width="32" height="32"><use href="#i-gear" /></svg></div>
            <div class="sq down"><svg width="34" height="34"><use href="#i-bar" /></svg></div>
            <div class="sq"><svg width="34" height="34" class="ov"><use href="#i-bare" /></svg></div>
          </div>
          <div class="line m21">Array Name: x_velocity</div>
          <div class="auto"><span>Automatic<br>Rescale Range<br>Mode</span>
            <div class="combo big"><span>Grow and update on 'Apply'</span><em><svg width="18" height="28" viewBox="0 0 18 28"><path d="M3 10l6-7 6 7M3 18l6 7 6-7" fill="none" stroke="#fff" stroke-width="3" stroke-linecap="round" stroke-linejoin="round" /></svg></em></div>
          </div>
          <label class="cb m12"><i />Interpret Values As Categories</label>
          <label class="cb m16"><i />Rescale On Visibility Change</label>
          <h3 class="m20">Mapping Data</h3>
          <hr>
          <div class="maprow">
            <svg class="plot" width="658" height="432" viewBox="2608 706 658 432">
              <defs>
                <linearGradient id="cwh"><stop v-for="(c, n) in coolwarm" :key="n" :offset="n / 8" :stop-color="c" /></linearGradient>
                <linearGradient id="cwa"><stop v-for="(c, n) in coolwarm" :key="n" :offset="n / 8" :stop-color="c" :stop-opacity="n / 8" /></linearGradient>
              </defs>
              <rect x="2608" y="706" width="658" height="432" fill="#fff" />
              <path d="M2615 1050 3258 713V1050z" fill="url(#cwa)" /><path d="M2615 1050 3258 713" stroke="#3c3e48" stroke-width="2" />
              <rect x="2615" y="1066" width="643" height="64" fill="url(#cwh)" />
              <g stroke="#85867a" stroke-width="2.200"><circle cx="2615" cy="1050" r="5.500" fill="#8d97dd" /><circle cx="3258" cy="713" r="5.500" fill="#e0607a" /><circle cx="2615" cy="1098" r="5.500" fill="#6c78d8" /><circle cx="2937" cy="1098" r="5.500" fill="#e2e2e0" /><circle cx="3258" cy="1098" r="5.500" fill="#d0304c" /></g>
            </svg>
            <div class="mbtns"><div v-for="b in mapButtons" :key="b" class="sq"><svg width="32" height="32" class="ov"><use :href="'#i-' + b" /></svg></div></div>
          </div>
          <div class="data"><span>Data:</span><div class="input soft">0</div></div>
          <label class="cb m11"><i />Use log scale when mapping data to colors</label>
          <label class="cb m6"><i />Enable opacity mapping for surfaces</label>
          <label class="cb m6 half"><i />Use log scale when mapping data to opacity</label>
          <h3 class="m16">Color Mapping Parameters</h3>
          <hr>
          <div class="cspace"><span>Color Space</span>
            <div class="combo big"><span>Diverging</span><em><svg width="18" height="28" viewBox="0 0 18 28"><path d="M3 10l6-7 6 7M3 18l6 7 6-7" fill="none" stroke="#fff" stroke-width="3" stroke-linecap="round" stroke-linejoin="round" /></svg></em></div>
          </div>
          <div class="nan"><i />Nan Color</div>
          <div class="srow o"><span>Nan Opacity</span><div class="slider"><u style="width: 223px" /><i /></div><div class="input">1</div></div>
          <h3 class="m25">Color Discretization</h3>
          <hr>
          <label class="cb m15"><i class="ck"><svg width="18" height="20" viewBox="0 0 18 20"><path d="M2 11l5 6 9-14" fill="none" stroke="#fff" stroke-width="3" stroke-linecap="round" /></svg></i>Discretize</label>
          <div class="srow t"><span>Number Of Table<br>Values</span><div class="slider"><u style="width: 67px" /><i /></div><div class="input">256</div></div>
          <div class="rbtns">
            <button class="b"><svg width="34" height="30"><use href="#i-refresh" /></svg></button>
            <button class="b"><svg width="34" height="34"><use href="#i-saverule" /></svg></button>
            <button class="b"><svg width="34" height="34"><use href="#i-save" /></svg></button>
            <button class="b dis rv"><svg width="34" height="34"><use href="#i-apply" /></svg><span>Render Views</span></button>
            <button class="b prim"><svg width="34" height="34"><use href="#i-apply" /></svg></button>
          </div>
        </div>
      </section>
    </div>

    <footer class="status">
      <div class="sx"><svg width="20" height="20"><use href="#i-delete" /></svg></div>
      <div class="prog" />
    </footer>
  </div>
</template>

<style>
body { margin: 0; overflow: hidden; }
</style>

<style scoped>
.app { width: 3360px; height: 2100px; display: flex; flex-direction: column; background: #ececec; color: #000; font: 25.500px/32px Inter, "Liberation Sans", sans-serif; letter-spacing: -0.15px; word-spacing: 1.500px; overflow: hidden; }
.app * { box-sizing: border-box; }
.defs { position: absolute; }
svg { display: block; flex: none; }
.ov { overflow: visible; }
button { font: inherit; letter-spacing: inherit; word-spacing: inherit; color: inherit; margin: 0; }

.toolbar { height: 88px; flex: none; display: flex; align-items: center; background: linear-gradient(#eeeeee, #c7c7c7); border-top: 1px solid #fff; border-bottom: 2px solid #aeaeae; }
.handle { height: 54px; flex: none; display: flex; flex-direction: column; justify-content: space-between; align-items: flex-end; padding-right: 7px; }
.tight .handle { padding-right: 3px; }
.handle i { width: 4px; height: 4px; border-radius: 2px; background: #a0a0a0; }
.sep { flex: none; align-self: stretch; display: flex; justify-content: center; padding: 3px 0 1px; }
.sep i { width: 2px; height: 100%; background: repeating-linear-gradient(#6f6f6f 0 2px, transparent 2px 6px); }
.tbtn { height: 84px; flex: none; display: flex; align-items: center; justify-content: center; position: relative; }
.tbtn.on { background: linear-gradient(#d2d2d2, #b0b0b0); border-radius: 8px 8px 0 0; }
.tbtn.off svg { opacity: .55; }
.drop { position: absolute; left: 65px; top: 64px; border: 7px solid transparent; border-top: 10px solid #1d1d1b; border-bottom: 0; }
.ttext { flex: none; white-space: nowrap; padding-bottom: 2px; letter-spacing: -0.4px; }
.combo { flex: none; height: 40px; display: flex; align-items: center; background: #fff; border-radius: 8px; box-shadow: 0 0 0 1px #c9c9c9, 0 2px 1px rgba(0, 0, 0, .22); padding-left: 16px; overflow: hidden; margin-bottom: 2px; white-space: nowrap; }
.combo > span { flex: 1; padding-bottom: 2px; }
.combo em { width: 33px; align-self: stretch; display: flex; align-items: center; justify-content: center; background: linear-gradient(#6ca8fb, #116ffe); }
.combo.dim { background: #e6e6e6; box-shadow: 0 0 0 1px #cfcfcf; }
.combo.dim em { background: none; }
.cico { margin: 0 12px 4px 9px; }
.tfield { flex: none; height: 42px; background: #fff; border: 2px solid #b0b0b0; padding-left: 4px; line-height: 36px; }
.tspin { flex: none; height: 41px; background: #fff; border-radius: 11px; box-shadow: 0 0 0 1px #c0c0c0, 0 1px 1px 1px rgba(0, 0, 0, .15); display: flex; align-items: center; justify-content: center; }

.body { height: 1782px; flex: none; display: flex; }
.left { width: 976px; flex: none; border-right: 2px solid #8f8f8f; display: flex; flex-direction: column; }
.title { height: 44px; flex: none; display: flex; align-items: center; gap: 8px; padding: 0 0 3px 4px; background: linear-gradient(#efefef, #c7c7c7); border-top: 1px solid #fff; border-bottom: 2px solid #adadad; font-size: 21px; letter-spacing: -0.2px; word-spacing: 0; }
.title span { flex: 1; text-align: center; padding: 6px 7px 0 0; }
.tree { height: 552px; flex: none; background: #fff; border: 1px solid #8d8d8d; border-width: 1px 2px 2px 2px; padding-top: 7px; }
.node { height: 43.500px; display: flex; align-items: center; padding-left: 11px; position: relative; }
.node::before { content: ''; position: absolute; left: 65px; top: -6px; width: 2px; height: 9px; background: #909090; }
.n0 span { padding-bottom: 2px; }
.teye { margin-right: 9px; }
.tico { margin-right: 9px; }
.n0 .tico { margin: 0 18px 2px 8px; }
.hl { height: 36px; width: 126px; background: #b3d7ff; display: flex; align-items: center; margin-left: -1px; padding-left: 1px; }
.dtabs { height: 45px; flex: none; display: flex; justify-content: center; align-items: flex-start; padding: 2px 0 0; background: linear-gradient(#ececec 21px, #d2d2d2 21px 23px, #e1e1e1 23px); }
.seg { height: 40px; display: flex; background: #fff; border-radius: 8px; overflow: hidden; box-shadow: 0 0 0 1px #c6c6c6, 0 1px 1px 1px rgba(0, 0, 0, .2); }
.dtabs .seg { width: 351px; outline: 5px solid #ececec; }
.dtabs .seg span { flex: 1; text-align: center; line-height: 42px; padding-left: 3px; }
.dtabs .seg .act { flex: 0 0 169px; padding: 0 4px 0 0; }
.act { background: linear-gradient(#6ca8fb, #116ffe); color: #fff; }

.b { border: 0; background: #fff; border-radius: 7px; box-shadow: 0 0 0 1px #cdcdcd, 0 2px 1px rgba(0, 0, 0, .25); display: flex; align-items: center; justify-content: center; padding: 0; height: 38px; white-space: nowrap; }
.dis { background: #f4f4f4; color: #808080; box-shadow: 0 0 0 1px #dadada, 0 2px 1px rgba(0, 0, 0, .08); }
.dis svg { opacity: .5; }
.actions { margin: 33px 0 0 37px; display: flex; gap: 8px; flex: none; }
.actions .b { width: 219px; }
.actions .b svg + span { margin-left: 14px; }
.searchrow { margin: 43px 0 0 25px; height: 52px; flex: none; display: flex; align-items: center; gap: 5px; }
.searchrow .input { width: 868px; }
.searchrow.r { margin: 24px 0 0 0; gap: 4px; }
.searchrow.r .input { width: 563px; }
.input { height: 40px; background: #fff; border: 1px solid #a5a5a5; border-top-width: 2px; border-top-color: #b0b0b0; padding-left: 3px; line-height: 39px; white-space: nowrap; }
.ph { color: #808080; }
.soft { color: #808080; border-color: #c8c8c8; }
.sq { width: 52px; height: 52px; flex: none; border: 2px solid #aeaeae; background: linear-gradient(#e2e2e2, #f7f7f7); display: flex; align-items: center; justify-content: center; overflow: hidden; }
.sq.down { background: linear-gradient(#c4c4c4, #d9d9d9); }
.s44 { width: 44px; height: 44px; }
.scroll { margin: 21px 0 0 24px; width: 926px; height: 885px; overflow: hidden; display: flex; flex-direction: column; flex: none; }
.scroll > *, .rc > * { flex: none; }
h3 { margin: 0; font-size: 25.500px; line-height: 32px; font-weight: 700; padding-left: 1px; height: 32px; letter-spacing: 0.2px; white-space: nowrap; }
.rc h3 { line-height: 31px; padding-left: 0; }
h3.cut { margin-top: -13px; height: 33px; }
hr { margin: 0; border: 0; height: 3px; width: 100%; background: linear-gradient(#b8b8b8 1px, #fff 1px); }
.m1 { margin-top: 1px; } .m6 { margin-top: 6px; } .m7 { margin-top: 7px; } .m11 { margin-top: 11px; } .m12 { margin-top: 12px; }
.m15 { margin-top: 15px; } .m16 { margin-top: 16px; } .m20 { margin-top: 20px; } .m21 { margin-top: 21px; } .m24 { margin-top: 24px; } .m25 { margin-top: 25px; }
.cb { height: 32px; display: flex; align-items: center; padding-left: 4px; white-space: nowrap; line-height: 34px; }
.cb i { width: 28px; height: 28px; border-radius: 6px; background: #fff; border: 1px solid #bdbdbd; border-top-color: #a5a5a5; margin-right: 8px; display: flex; align-items: center; justify-content: center; flex: none; box-shadow: inset 0 2px 2px rgba(0, 0, 0, .06); }
.cb .ck { background: #3d87f8; border-color: #3d87f8; }
.half { height: 28px; overflow: hidden; align-items: flex-start; color: #808080; }
.half i { margin-top: 2px; background: #f3f3f3; border-color: #d0d0d0; }
.vec { display: flex; height: 40px; align-items: center; padding-left: 5px; line-height: 34px; }
.vec span { width: 92px; flex: none; letter-spacing: -0.3px; }
.vec .input { width: 266px; margin-right: 7px; }
.note { margin: 6px 0 0 5px; font-weight: 700; white-space: nowrap; letter-spacing: 0.03px; height: 64px; }
.grid { margin: 13px 0 0 17px; display: grid; grid-template-columns: 437px 435px; gap: 10px 7px; }
.grid .b { height: 38px; line-height: 34px; }
.wide { grid-column: span 2; }
.offset { margin-top: 18px; height: 40px; display: flex; padding-left: 1px; }
.offset span { width: 84px; line-height: 30px; }
.offset .input { flex: 1; border-right: 0; }
.range { margin-top: 12px; padding-left: 1px; height: 32px; letter-spacing: 0.4px; white-space: nowrap; }
.range b { letter-spacing: 0.2px; }
.tablerow { margin-top: 15px; display: flex; gap: 1px; }
.table { width: 756.500px; height: 190px; border: 1px solid #a5a5a5; border-top: 2px solid #8f8f8f; display: flex; background: #fff; }
.rowh { width: 29px; background: #ececec; }
.rowh span { display: block; height: 59px; background: #f6f6f6; border-bottom: 2px solid #c9c9c9; border-right: 2px solid #d8d8d8; font-size: 20px; line-height: 57px; text-align: center; }
.cells { flex: 1; }
.cell { height: 59px; border-bottom: 1px solid #a5a5a5; border-right: 1px solid #a5a5a5; padding-left: 11px; line-height: 57px; }
.tcol { display: flex; flex-direction: column; gap: 2px; }
.faded { opacity: .8; }
.trio { display: flex; gap: 8px; }

.center { width: 1602px; flex: none; display: flex; flex-direction: column; }
.ctabs { height: 20px; flex: none; display: flex; padding-left: 647px; position: relative; z-index: 1; }
.ctabs .seg { width: 305px; }
.ctabs .act { width: 245px; display: flex; align-items: center; padding-left: 16px; }
.lt { margin: 0 18px 0 15px; width: 118px; white-space: nowrap; padding-top: 2px; }
.ctabs .act svg:last-child { margin-left: -2px; }
.plus { flex: 1; text-align: center; line-height: 43px; font-size: 27px; padding-left: 3px; }
.pane { flex: 1; margin-left: 0; background: #e1e1e1; border: 1px solid #cfcfcf; border-width: 2px 1px 0 1px; border-radius: 10px 10px 0 0; padding: 30px 0 0 6px; }
.vhead { height: 46px; display: flex; align-items: flex-start; }
.vtools { width: 872px; height: 44px; display: flex; align-items: center; background: linear-gradient(#efefef, #c7c7c7); border-top: 1px solid #fff; border-bottom: 2px solid #adadad; }
.vt { width: 44px; height: 40px; display: flex; align-items: center; justify-content: center; }
.d3 { font: 22px "Noto Sans", sans-serif; padding-left: 1px; }
.vname { margin-left: auto; font-weight: 700; letter-spacing: 0.25px; line-height: 35px; margin-top: 4px; border-bottom: 2px solid #000; height: 32px; width: 170px; white-space: nowrap; }
.vbtns { display: flex; gap: 2px; margin: 0 5px 0 22px; }
.frame { width: 1590px; height: 1676px; border: 3px solid #0000ff; padding: 2px; background: #e4e4e4; }
.lbl text { font: 29px "Lato", sans-serif; fill: #fff; letter-spacing: 0; word-spacing: 0; }
.lbl .tl { font-size: 31px; }
.lbl .ax { font: 33px "Open Sans", sans-serif; }

.right { flex: 1; border-left: 2px solid #8f8f8f; display: flex; flex-direction: column; }
.right .title { padding-left: 5px; }
.rc { margin-left: 25px; width: 732px; display: flex; flex-direction: column; }
.line { height: 32px; line-height: 32px; }
.auto { margin-top: 15px; height: 96px; display: flex; align-items: center; }
.auto > span, .cspace > span { width: 220px; flex: none; }
.combo.big { width: 504px; margin: 0 0 4px; }
.maprow { margin: 11px 0 0 4px; display: flex; }
.mbtns { display: flex; flex-direction: column; gap: 2px; }
.mbtns .sq:nth-child(6) { margin-top: 2px; }
.data { margin: 13px 0 0 5px; height: 40px; display: flex; align-items: center; line-height: 34px; }
.data span { width: 76px; }
.data .input { width: 632px; }
.cspace { margin-top: 15px; height: 40px; display: flex; line-height: 24px; }
.cspace .combo { line-height: 32px; }
.nan { margin-top: 16px; height: 52px; border: 2px solid #aeaeae; background: linear-gradient(#e2e2e2, #f7f7f7); display: flex; align-items: center; padding-left: 9px; font-size: 20.500px; line-height: 34px; }
.nan i { width: 30px; height: 30px; border-radius: 50%; background: #ff0; border: 2px solid #55552a; margin-right: 9px; }
.srow { display: flex; align-items: center; }
.srow.o { margin-top: 15px; height: 40px; }
.srow.t { margin-top: 12px; height: 64px; }
.srow > span { width: 217px; white-space: nowrap; }
.srow.o > span { align-self: flex-start; line-height: 18px; }
.srow .input { width: 249px; margin-left: auto; }
.slider { width: 238px; height: 6px; border-radius: 3px; background: #b8b8b8; display: flex; align-items: center; margin-top: 2px; }
.slider u { height: 6px; background: #3d87f8; border-radius: 3px; flex: none; }
.slider i { width: 31px; height: 31px; border-radius: 50%; background: #fff; box-shadow: 0 0 0 1px #c4c4c4, 0 2px 2px rgba(0, 0, 0, .2); margin-left: -15px; flex: none; }
.rbtns { margin: 38px 0 0 13px; display: flex; }
.rbtns .b { width: 97px; margin-right: 7px; }
.rbtns .rv { width: 262px; margin-left: 25px; color: #808080; }
.rv span { margin-left: 11px; }
.rbtns .prim { background: linear-gradient(#4f92fa, #115cdf); box-shadow: 0 0 0 1px #2f6fdc; }

.status { height: 54px; flex: none; border-top: 2px solid #858585; background: linear-gradient(#eaeaea, #aeaeae); display: flex; padding: 5px 0 0 1682px; }
.sx { width: 44px; height: 43px; border: 2px solid #b5b5b5; background: #dedede; display: flex; align-items: center; justify-content: center; }
.sx svg { opacity: .55; }
.prog { flex: 1; margin-left: 4px; height: 43px; border: 1px solid #a9a9a9; border-right: 0; border-bottom: 2px solid #fff; background: linear-gradient(#e0e0e0, #bababa); }
</style>
